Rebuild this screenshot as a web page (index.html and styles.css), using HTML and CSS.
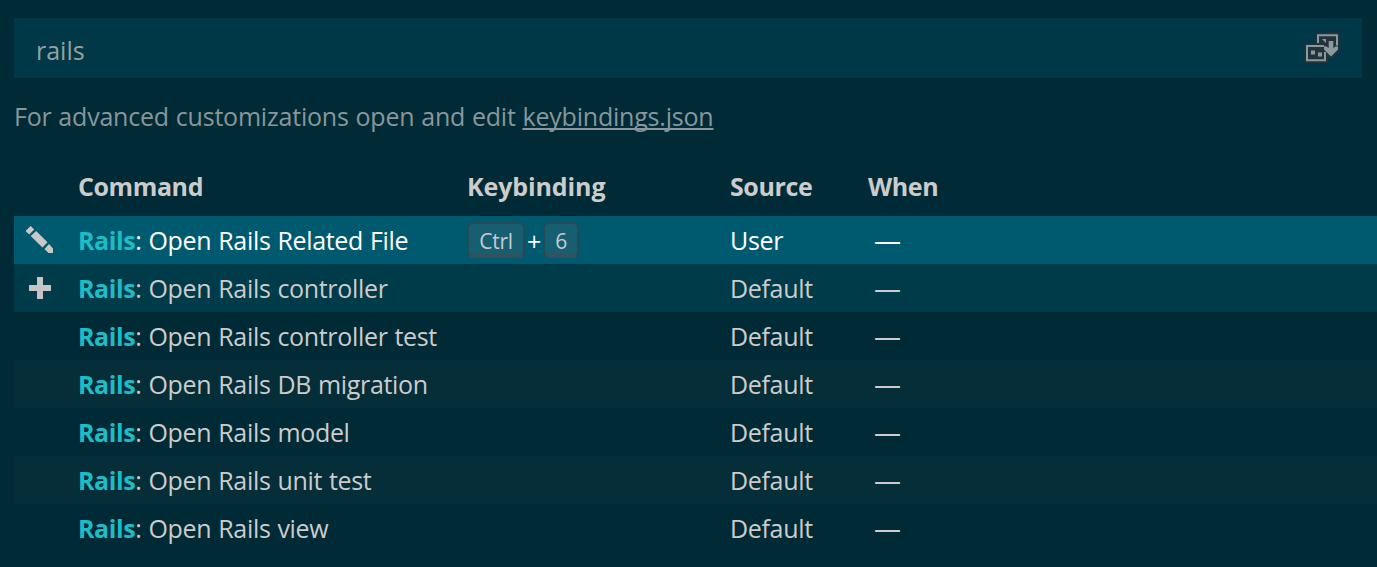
FILE: index.html
```html
<!DOCTYPE html>
<html lang="en">
<head>
<meta charset="utf-8">
<title>Keyboard Shortcuts</title>
<link rel="stylesheet" href="styles.css">
</head>
<body>
<main class="editor">
  <div class="search">
    <span class="query">rails</span>
    <svg class="record" width="36" height="32" viewBox="0 0 36 32">
      <path fill="#23333b" d="M11.500 .5h24v17.500L28.500 26H24v5H.5V11.500h11z"/>
      <path fill="#8a999c" d="M13 2.300h21v11.200h-2V4.300H15V11h-2z"/>
      <path fill="#8a999c" d="M18 7h4v4z"/>
      <path fill="#8a999c" d="M2 13h18v2H4v12.300h16V20h2v9.300H2z"/>
      <path fill="#8a999c" d="M7 18.500h4v4H7zM14 20.500h4v4h-4zM24.700 9h4.600v7l2.700-1.800 2 .3V17.500L27 24.500 20 17.500v-3l2-.3 2.700 1.800z"/>
    </svg>
  </div>
  <p class="hint">For advanced customizations open and edit <a class="link">keybindings.json</a></p>
  <div class="table">
    <div class="row head"><span></span><span>Command</span><span class="h-key">Keybinding</span><span>Source</span><span>When</span></div>
    <div class="row selected">
      <svg class="icon" width="32" height="32" viewBox="0 0 32 32"><g fill="#c8c8c8"><path d="M2 6.500 6.700 2 10.200 5.500 5.200 10.500 2 7.500zM6.700 12 12.200 7 23.500 18.200 18.500 23.500zM25 20l4 4.500V29h-4.500L20.500 25z"/></g></svg>
      <span class="command"><b>Rails</b>: Open Rails Related File</span>
      <span class="keys"><kbd class="key ctrl">Ctrl</kbd><span class="plus">+</span><kbd class="key six">6</kbd></span>
      <span>User</span><span class="when">—</span>
    </div>
    <div class="row hover">
      <svg class="icon" width="32" height="32" viewBox="0 0 32 32"><path fill="#c5c5c5" d="M13 5h6v8h8v6h-8v8h-6v-8H5v-6h8z"/></svg>
      <span class="command"><b>Rails</b>: Open Rails controller</span><span></span><span>Default</span><span class="when">—</span>
    </div>
    <div class="row"><span></span><span class="command"><b>Rails</b>: Open Rails controller test</span><span></span><span>Default</span><span class="when">—</span></div>
    <div class="row odd"><span></span><span class="command"><b>Rails</b>: Open Rails DB migration</span><span></span><span>Default</span><span class="when">—</span></div>
    <div class="row"><span></span><span class="command"><b>Rails</b>: Open Rails model</span><span></span><span>Default</span><span class="when">—</span></div>
    <div class="row odd"><span></span><span class="command"><b>Rails</b>: Open Rails unit test</span><span></span><span>Default</span><span class="when">—</span></div>
    <div class="row"><span></span><span class="command"><b>Rails</b>: Open Rails view</span><span></span><span>Default</span><span class="when">—</span></div>
  </div>
</main>
</body>
</html>
```
FILE: styles.css
```css
* { box-sizing: border-box; }
body {
  margin: 0;
  height: 567px;
  overflow: hidden;
  background: #002b36;
  color: #cccccc;
  font: 25px/48px "Open Sans", "Noto Sans", sans-serif;
  letter-spacing: -0.33px;
  white-space: nowrap;
}
.editor { padding: 18px 0 0 14px; }
.search {
  display: flex;
  justify-content: space-between;
  width: 1348px;
  height: 60px;
  padding: 14px 22px 0;
  background: #003847;
  color: #93a1a1;
}
.query { line-height: 36px; letter-spacing: 0; }
.record { flex: none; }
.hint {
  margin: 14px 0 22px;
  color: #87979b;
  letter-spacing: -0.2px;
  word-spacing: 0.5px;
}
.link {
  text-decoration: underline;
  text-decoration-thickness: 2px;
  text-underline-offset: 2px;
  text-decoration-skip-ink: none;
}
.row {
  display: grid;
  grid-template-columns: 64px 389px 263px 138px 1fr;
  height: 48px;
}
.head {
  height: 54px;
  font-weight: 700;
  letter-spacing: -0.4px;
}
.h-key { letter-spacing: -0.1px; }
.selected { background: #005a6f; color: #fff; }
.hover { background: #003b49; }
.odd { background: #052e39; }
.command { word-spacing: 0.8px; }
.row b { color: #1ebcc5; letter-spacing: -0.4px; }
.icon { margin: 8px 0 0 10px; }
.keys { display: flex; padding-top: 6px; }
.key {
  height: 36px;
  border: 2px solid #224a57;
  border-bottom-color: #34515d;
  border-radius: 6px;
  background: #175e70;
  box-shadow: inset 0 -2px 0 #34515d;
  color: #c5cccf;
  font: 21px/34px "Open Sans", "Noto Sans", sans-serif;
  text-align: center;
}
.ctrl { width: 58px; }
.six { width: 36px; }
.plus { width: 18px; text-align: center; line-height: 38px; }
.when { padding-left: 6px; font-size: 27px; line-height: 47px; letter-spacing: 0; }
```
